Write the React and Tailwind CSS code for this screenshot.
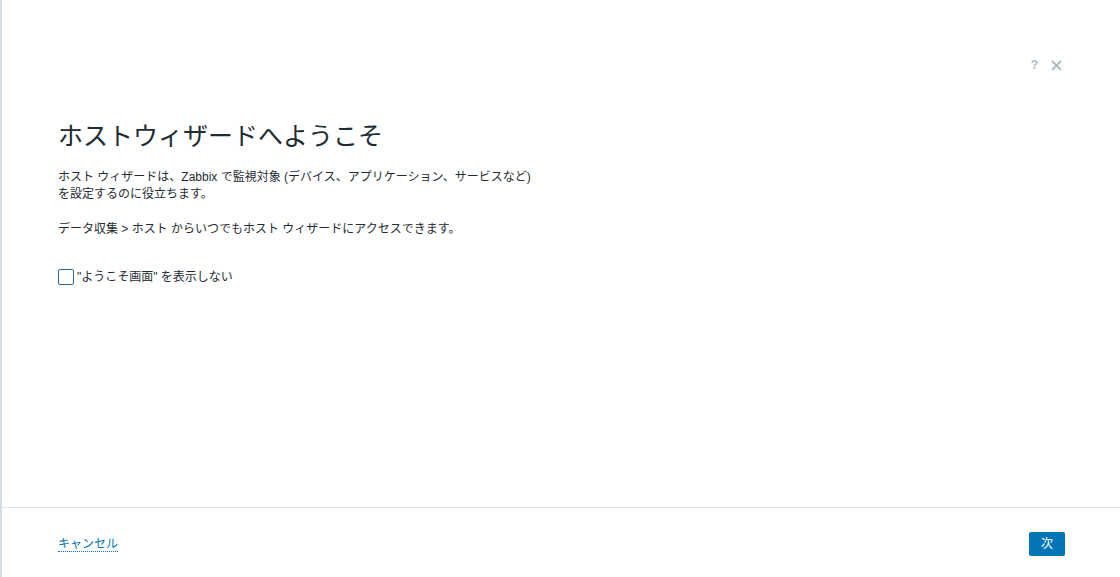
import React from 'react';

const font = { fontFamily: '"Liberation Sans", Arial, "Noto Sans CJK JP", sans-serif' };

const HostWizardWelcome = () => {
  return (
    <div
      className="flex h-[577px] w-full flex-col border-l-2 border-[#d5dde2] bg-white text-[#1f2c33]"
      style={font}
    >
      {/* Body */}
      <div className="flex-1 pl-[56px] pr-[58px] pt-[53px]">
        {/* Header icons */}
        <div className="flex h-[24px] items-center justify-end gap-[13px]">
          <span className="text-[12px] font-bold leading-none text-[#acbbc2]">?</span>
          <svg width="11" height="11" viewBox="0 0 11 11" className="text-[#acbbc2]">
            <path d="M1 1 L10 10 M10 1 L1 10" stroke="currentColor" strokeWidth="1.8" />
          </svg>
        </div>

        <h1 className="mt-[45px] text-[25px] font-normal leading-[28px]">
          ホストウィザードへようこそ
        </h1>

        <p className="mt-[19px] text-[12px] leading-[17px]">
          ホスト ウィザードは、Zabbix で監視対象 (デバイス、アプリケーション、サービスなど)
          <br />
          を設定するのに役立ちます。
        </p>

        <p className="mt-[18px] text-[12px] leading-[17px]">
          データ収集 &gt; ホスト からいつでもホスト ウィザードにアクセスできます。
        </p>

        <label className="mt-[30px] flex items-center gap-[3px] text-[12px]">
          <span className="block h-[16px] w-[16px] rounded-[2px] border border-[#2a6a9c] bg-white" />
          <span>"ようこそ画面" を表示しない</span>
        </label>
      </div>

      {/* Footer */}
      <div className="flex h-[70px] items-start justify-between border-t border-[#dfe4e7] pl-[56px] pr-[55px] pt-[24px]">
        <a
          href="#cancel"
          className="mt-[5px] border-b border-dotted border-[#0275b8] text-[12px] leading-[14px] text-[#0275b8]"
        >
          キャンセル
        </a>
        <button className="h-[24px] w-[36px] rounded-[2px] bg-[#0275b8] text-[12px] text-white">
          次
        </button>
      </div>
    </div>
  );
};

export default function App() {
  return <HostWizardWelcome />;
}
